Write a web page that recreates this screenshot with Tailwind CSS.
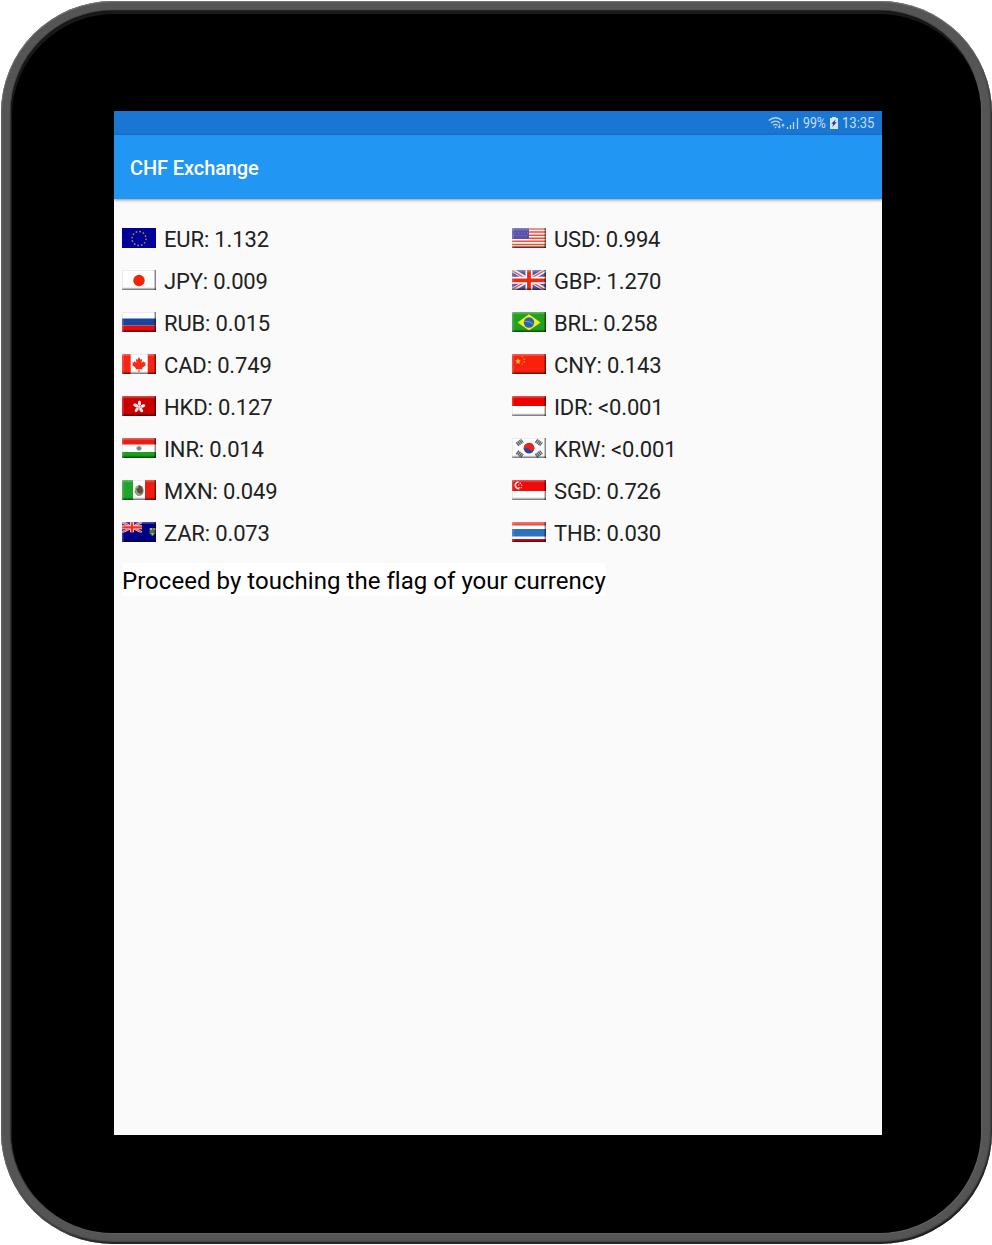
<!DOCTYPE html>
<html lang="en">
<head>
<meta charset="utf-8">
<title>CHF Exchange</title>
<script src="https://cdn.jsdelivr.net/npm/@tailwindcss/browser@4"></script>
</head>
<body class="bg-white font-['Roboto',sans-serif]">
<svg class="absolute w-0 h-0">
  <defs>
    <linearGradient id="b" x1="0" y1="0" x2="0" y2="1"><stop offset="0" stop-color="#fff" stop-opacity=".4"/><stop offset=".13" stop-color="#fff" stop-opacity="0"/><stop offset=".13" stop-color="#000" stop-opacity="0"/><stop offset=".86" stop-color="#000" stop-opacity="0"/><stop offset="1" stop-color="#000" stop-opacity=".6"/></linearGradient>
    <linearGradient id="r" x1="0" y1="0" x2="1" y2="0"><stop offset="0" stop-color="#fff" stop-opacity=".3"/><stop offset=".07" stop-color="#fff" stop-opacity="0"/><stop offset=".07" stop-color="#000" stop-opacity="0"/><stop offset=".93" stop-color="#000" stop-opacity="0"/><stop offset="1" stop-color="#000" stop-opacity=".6"/></linearGradient>
    <g id="bevel"><path fill="url(#b)" d="M0 0h34v20H0z"/><path fill="url(#r)" d="M0 0h34v20H0z"/><path fill="none" stroke="#000" stroke-opacity=".07" d="M.5 20V.5H34"/></g>
  </defs>
</svg>
<div class="w-[992px] h-[1245px] p-px pr-0">
<div class="w-[990.5px] h-[1243px] rounded-[112px] bg-[#555] p-[10px] shadow-[inset_0_1px_1px_#777,inset_1px_0_1px_#666,inset_-1px_-2px_2px_#181818]">
<div class="w-[970px] h-[1222px] rounded-[102px] bg-black pt-[100px] pl-[103px] shadow-[inset_1px_3px_0_#191919,0_-1px_1px_#222,-1px_0_1px_#333,0_1px_1px_#686868,1px_0_1px_#686868]">
<main class="w-[768px] h-[1024px] bg-[#fafafa] flex flex-col">
  <div class="h-6 bg-[#1976d2] flex items-center justify-end pr-[7px] text-[#c8def4] text-[14px] leading-6">
    <svg class="mr-[3px]" width="32" height="14" viewBox="0 0 32 14" fill="none" stroke="#bcd6f1" stroke-width="1.3">
      <path d="M.7 4.5Q7.5-1 14.3 4.5M3 7q4.5-3.7 9 0M5.2 9.2q2.3-1.7 4.6 0"/><path d="M6.2 10.7h2.6L7.5 12.4z" fill="#bcd6f1" stroke="none"/>
      <path d="M9.5 10.2h3.6l-1.8 2.6zM13.2 9.8l1.8-2.6 1.8 2.6zM11 8h.8v3H11zM14.6 9h.8v2.5h-.8z" fill="#bcd6f1" stroke="none"/>
      <path d="M19.5 13v-2M22.5 13V9M25.500 13V6M29.500 13V2" stroke-width="1.3"/>
    </svg>
    <span class="w-[23px] mr-1 whitespace-nowrap"><span class="inline-block origin-left scale-x-[.88]">99%</span></span>
    <svg class="mr-1" width="8" height="12" viewBox="0 0 8 12"><path fill="#d4e6f8" d="M2 0h4v1h2v11H0V1h2z"/><path fill="#17477a" d="M5.8 2.2 1.3 6.8h2L2.2 10l4.6-4.8H4.6z"/></svg>
    <span class="w-[33px] whitespace-nowrap"><span class="inline-block origin-left scale-x-[.93]">13:35</span></span>
  </div>
  <header class="h-16 shrink-0 bg-[#2196f3] text-white text-[20px] tracking-[-0.1px] font-medium leading-[66px] pl-4 shadow-[0_1px_3px_rgba(0,0,0,.45)]">CHF Exchange</header>
  <section class="grid grid-cols-[390px_1fr] auto-rows-[42px] pt-[20px] pl-2 text-[22px] tracking-[-0.15px] leading-[42px] text-[#212121]">
    <div class="flex items-center gap-2"><svg class="-mt-[4px]" width="34" height="20" viewBox="0 0 34 20"><path fill="#000099" d="M0 0h34v20H0z"/><circle cx="17" cy="10.5" r="7" fill="none" stroke="#a89438" stroke-width="1.4" stroke-dasharray="1.7 1.965"/></svg><span>EUR: 1.132</span></div>
    <div class="flex items-center gap-2"><svg class="-mt-[4px]" width="34" height="20" viewBox="0 0 34 20"><path fill="#fff3ee" d="M0 0h34v20H0z"/><path stroke="#e5533f" stroke-width="1.5" d="M0 1h34M0 4.1h34M0 7.2h34M0 10.3h34M0 13.3h34M0 16.4h34M0 19.2h34"/><path fill="#5752a8" d="M0 0h17v11H0z"/><path stroke="#9692ca" stroke-width=".8" stroke-dasharray="1 2" d="M1.5 2.5H16M3 5h13M1.5 7.5H16"/><use href="#bevel"/></svg><span>USD: 0.994</span></div>
    <div class="flex items-center gap-2"><svg class="-mt-[4px]" width="34" height="20" viewBox="0 0 34 20"><path fill="#fff" d="M0 0h34v20H0z"/><circle cx="17" cy="10.5" r="5.7" fill="#f32500"/><use href="#bevel"/></svg><span>JPY: 0.009</span></div>
    <div class="flex items-center gap-2"><svg class="-mt-[4px]" width="34" height="20" viewBox="0 0 34 20"><path fill="#5058ad" d="M0 0h34v20H0z"/><path stroke="#fff" stroke-width="4" stroke-opacity=".85" d="m0 0 34 20M34 0 0 20"/><path stroke="#e0523b" stroke-width="1.1" d="m0 .5 34 20M34-.5 0 19.5"/><path stroke="#fff" stroke-width="7" d="M17 0v20M0 10.3h34"/><path stroke="#f02a12" stroke-width="3.8" d="M17 0v20M0 10.3h34"/><use href="#bevel"/></svg><span>GBP: 1.270</span></div>
    <div class="flex items-center gap-2"><svg class="-mt-[4px]" width="34" height="20" viewBox="0 0 34 20"><path fill="#fff" d="M0 0h34v7H0z"/><path fill="#1647a0" d="M0 6.5h34v7H0z"/><path fill="#e80b0b" d="M0 13.5h34V20H0z"/><use href="#bevel"/></svg><span>RUB: 0.015</span></div>
    <div class="flex items-center gap-2"><svg class="-mt-[4px]" width="34" height="20" viewBox="0 0 34 20"><path fill="#22a022" d="M0 0h34v20H0z"/><path fill="#f5ee25" d="M17 2.2 28.6 10.5 17 18.5 5.6 10.5z"/><circle cx="17" cy="10.5" r="5.2" fill="#2c62ae"/><path stroke="#a8c7dc" fill="none" d="M12.2 9.2q5-.7 9.2 3" stroke-opacity=".6"/><use href="#bevel"/></svg><span>BRL: 0.258</span></div>
    <div class="flex items-center gap-2"><svg class="-mt-[4px]" width="34" height="20" viewBox="0 0 34 20"><path fill="#f92412" d="M0 0h34v20H0z"/><path fill="#fff" d="M8.7 0h17v20h-17z"/><path fill="#f52a17" d="m17 3 1.5 2.7 1.6-.6-.6 4 2-1.8.5 1.2 1.8-.2-.7 2 .9.8-3.9 3 .4 1.3-3-.5V18h-1v-3.1l-3 .5.4-1.3-3.9-3 .9-.8-.7-2 1.8.2.5-1.2 2 1.8-.6-4 1.6.6z"/><use href="#bevel"/></svg><span>CAD: 0.749</span></div>
    <div class="flex items-center gap-2"><svg class="-mt-[4px]" width="34" height="20" viewBox="0 0 34 20"><path fill="#f8210d" d="M0 0h34v20H0z"/><path fill="#ffd51b" d="m6 4.3.8 2 2.100.1L7.200 7.800l.6 2.200L6 8.800l-1.800 1.200.6-2.200-1.700-1.400 2.100-.1z"/><path fill="#f6a018" fill-opacity=".7" d="M9.500 2h1.500v1.300H9.500zM11.500 4.300H13v1.400h-1.500zM11.500 7.300H13v1.400h-1.500zM9.500 9.600H11V11H9.500z"/><use href="#bevel"/></svg><span>CNY: 0.143</span></div>
    <div class="flex items-center gap-2"><svg class="-mt-[4px]" width="34" height="20" viewBox="0 0 34 20"><path fill="#cb0000" d="M0 0h34v20H0z"/><g fill="#ffe9e9" transform="translate(17.200 10.800)"><ellipse cx=".3" cy="-3.700" rx="1.600" ry="2.600"/><ellipse cx=".3" cy="-3.700" rx="1.600" ry="2.600" transform="rotate(72)"/><ellipse cx=".3" cy="-3.700" rx="1.600" ry="2.600" transform="rotate(144)"/><ellipse cx=".3" cy="-3.700" rx="1.600" ry="2.600" transform="rotate(216)"/><ellipse cx=".3" cy="-3.700" rx="1.600" ry="2.600" transform="rotate(288)"/><circle r="1.200"/></g><use href="#bevel"/></svg><span>HKD: 0.127</span></div>
    <div class="flex items-center gap-2"><svg class="-mt-[4px]" width="34" height="20" viewBox="0 0 34 20"><path fill="#fff" d="M0 0h34v20H0z"/><path fill="#ed0000" d="M0 0h34v10H0z"/><use href="#bevel"/></svg><span>IDR: &lt;0.001</span></div>
    <div class="flex items-center gap-2"><svg class="-mt-[4px]" width="34" height="20" viewBox="0 0 34 20"><path fill="#fff" d="M0 0h34v20H0z"/><path fill="#e61e13" d="M0 0h34v6.500H0z"/><path fill="#18a018" d="M0 14h34v6H0z"/><circle cx="17" cy="10.300" r="2.400" fill="#777d8d" stroke="#c0c3cc" stroke-width="1"/><use href="#bevel"/></svg><span>INR: 0.014</span></div>
    <div class="flex items-center gap-2"><svg class="-mt-[4px]" width="34" height="20" viewBox="0 0 34 20"><path fill="#fff" d="M0 0h34v20H0z"/><circle cx="17" cy="10.300" r="5.300" fill="#1c4c9e"/><path fill="#ee2418" d="M12.300 7.800A5.300 5.300 0 0 1 22.200 11.500Q20 14 17.500 11.500 15 9 11.800 11.300 11.600 9.300 12.300 7.800z"/><g stroke="#606469" stroke-width="4.500" stroke-dasharray="1.500 .4"><path d="m5 6.500 5.500-4M24 2.500l5.500 4M5 14l5.500 4M24 18l5.500-4"/></g><use href="#bevel"/></svg><span>KRW: &lt;0.001</span></div>
    <div class="flex items-center gap-2"><svg class="-mt-[4px]" width="34" height="20" viewBox="0 0 34 20"><path fill="#fff" d="M0 0h34v20H0z"/><path fill="#20a52b" d="M0 0h11v20H0z"/><path fill="#f11b12" d="M23 0h11v20H23z"/><ellipse cx="17.200" cy="10.200" rx="4.500" ry="5.300" fill="#a5a495"/><path fill="#5c4c3c" d="m17 5 3 2 1 4-2 3-3-1-2-4 2-1z"/><path fill="none" stroke="#6f8b67" d="M13 11q1 4.500 4.300 4.500t4-4"/><use href="#bevel"/></svg><span>MXN: 0.049</span></div>
    <div class="flex items-center gap-2"><svg class="-mt-[4px]" width="34" height="20" viewBox="0 0 34 20"><path fill="#fff" d="M0 0h34v20H0z"/><path fill="#ed0b0b" d="M0 0h34v11H0z"/><path fill="none" stroke="#fff0f0" stroke-width="1.600" d="M6.500 2Q3 2.500 3.300 5.700 4 9 7.300 8.800"/><path fill="#ffd4d4" fill-opacity=".8" d="M7.500 2.500H9V4H7.500zM6 4.500h1.300v1.300H6zM9 4.500h1.300v1.300H9zM6.600 7H8v1.200H6.600zM8.600 7h1.300v1.200H8.600z"/><use href="#bevel"/></svg><span>SGD: 0.726</span></div>
    <div class="flex items-center gap-2"><svg class="-mt-[4px]" width="34" height="20" viewBox="0 0 34 20"><path fill="#000087" d="M0 0h34v20H0z"/><svg width="20" height="10.500" viewBox="0 0 20 10.500"><path stroke="#f2cbd2" stroke-width="2.400" d="m0 0 20 10.500M20 0 0 10.500"/><path stroke="#f03030" stroke-width="1" d="m0 0 20 10.500M20 0 0 10.500"/><path stroke="#ffd0ce" stroke-width="4" d="M10 0v10.500M0 5.300h20"/><path stroke="#f33028" stroke-width="2.300" d="M10 0v10.500M0 5.300h20"/></svg><path fill="#526b44" d="M27.500 6h6v5.500l-3 3-3-3z"/><path fill="#c8b43c" d="M28 6h2v2h-2zM31.500 6h2v2h-2zM29 11h3l-1.500 2.500z"/><path fill="#207a8c" d="M29 8h3v3h-3z"/><use href="#bevel"/></svg><span>ZAR: 0.073</span></div>
    <div class="flex items-center gap-2"><svg class="-mt-[4px]" width="34" height="20" viewBox="0 0 34 20"><path fill="#fff" d="M0 0h34v20H0z"/><path fill="#f04540" d="M0 0h34v3.500H0z"/><path fill="#2c72bd" d="M0 7h34v7.500H0z"/><path fill="#e80a12" d="M0 17h34v3H0z"/><use href="#bevel"/></svg><span>THB: 0.030</span></div>
  </section>
  <p class="ml-2 mt-[8px] self-start h-[33px] bg-white text-black text-[24px] tracking-[0.04px] leading-9 whitespace-nowrap">Proceed by touching the flag of your currency</p>
</main>
</div>
</div>
</div>
</body>
</html>
